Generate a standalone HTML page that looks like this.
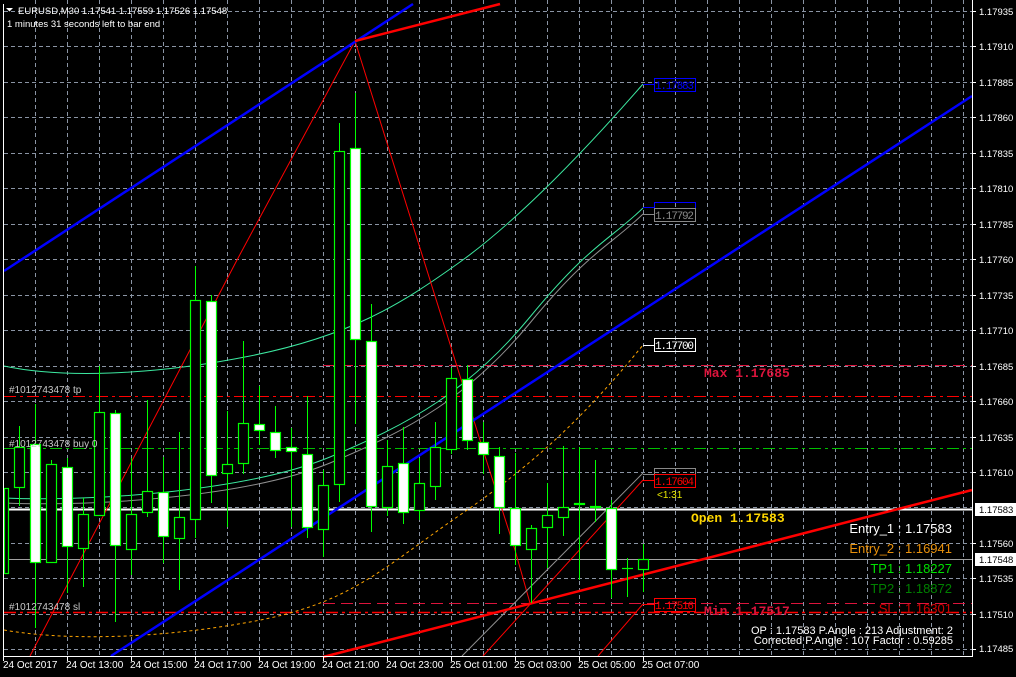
<!DOCTYPE html>
<html><head><meta charset="utf-8"><style>
html,body{margin:0;padding:0;background:#000;width:1016px;height:677px;overflow:hidden}
svg{display:block}
text{font-family:"Liberation Sans",sans-serif}
.mono{font-family:"Liberation Mono",monospace}
</style></head><body>
<svg width="1016" height="677" viewBox="0 0 1016 677" xmlns="http://www.w3.org/2000/svg">
<rect width="1016" height="677" fill="#000"/>
<!-- grid -->
<g stroke="#8a94a4" stroke-width="1" stroke-dasharray="4,3" fill="none">
<path d="M4 11.5H972M4 46.5H972M4 82.5H972M4 117.5H972M4 153.5H972M4 188.5H972M4 224.5H972M4 259.5H972M4 295.5H972M4 330.5H972M4 366.5H972M4 401.5H972M4 437.5H972M4 472.5H972M4 507.5H972M4 543.5H972M4 578.5H972M4 614.5H972M4 649.5H972"/>
<path d="M35.5 0V656M67.5 0V656M99.5 0V656M131.5 0V656M163.5 0V656M195.5 0V656M227.5 0V656M259.5 0V656M291.5 0V656M323.5 0V656M355.5 0V656M387.5 0V656M419.5 0V656M451.5 0V656M483.5 0V656M515.5 0V656M547.5 0V656M579.5 0V656M611.5 0V656M643.5 0V656M675.5 0V656M707.5 0V656M739.5 0V656M771.5 0V656M803.5 0V656M835.5 0V656M867.5 0V656M899.5 0V656M931.5 0V656M963.5 0V656"/>
</g>
<!-- horizontal level lines -->
<g fill="none">
<path d="M323 365.5H972" stroke="#dc143c" stroke-dasharray="12,6"/>
<path d="M4 396.5H972" stroke="#ff0000" stroke-dasharray="12,4,3,4"/>
<path d="M4 448.5H972" stroke="#00c000" stroke-dasharray="12,4,3,4"/>
<path d="M323 603.5H972" stroke="#dc143c" stroke-dasharray="12,6"/>
<path d="M4 612.5H972" stroke="#ff0000" stroke-dasharray="12,4,3,4" stroke-width="1.5"/>
<path d="M4 559.5H972" stroke="#a0a0a0"/>
<path d="M4 509.5H972" stroke="#ffffff" stroke-width="2"/>
</g>
<!-- curves -->
<g fill="none" stroke-width="1">
<path stroke="#3ce8a0" d="M4 366 C 60 378, 150 376, 250 356 S 400 305, 460 262 S 590 145, 643 84"/>
<path stroke="#3ce8a0" d="M4 498 C 100 502, 250 490, 330 457 S 470 390, 530 317 S 610 240, 643 208"/>
<path stroke="#909090" d="M4 503 C 100 507, 250 496, 330 463 S 470 396, 530 323 S 610 246, 643 214"/>
<path stroke="#ffa500" stroke-dasharray="3,3" d="M4 630 C 60 640, 150 640, 250 622 S 380 570, 460 515 S 590 410, 643 345"/>
</g>
<!-- thin red zigzag -->
<g fill="none" stroke="#ff0000" stroke-width="1">
<polyline points="30,656 237,260 355,41 430,280 485,456 515,550 530,603"/>
<line x1="483" y1="656" x2="643" y2="480"/>
<line x1="598" y1="656" x2="643" y2="604"/>
</g>
<line x1="462" y1="656" x2="643" y2="473" stroke="#909090"/>
<!-- blue lines -->
<g stroke="#0000ff" stroke-width="2.5">
<line x1="4" y1="271" x2="413" y2="4"/>
<line x1="111" y1="656" x2="972" y2="96"/>
</g>
<!-- red thick lines -->
<g stroke="#ff0000" stroke-width="2.5">
<line x1="355" y1="41" x2="500" y2="4"/>
<line x1="323" y1="657" x2="972" y2="490"/>
</g>
<!-- candles -->
<g stroke="#00ff00" stroke-width="1">
<path d="M3.5 423V575M19.5 426V506M35.5 404V628M51.5 460V563M67.5 458V593M83.5 498V587M99.5 366V515M115.5 410V622M131.5 458V575M147.5 400V517M163.5 457V563M179.5 432V590M195.5 266V538M211.5 295V503M227.5 411V527M243.5 341V474M259.5 386V445M275.5 406V458M291.5 428V527M307.5 396V538M323.5 470V557M339.5 123V502M355.5 93V424M371.5 304V532M387.5 440V516M403.5 427V524M419.5 458V520M435.5 422V500M451.5 368V454M467.5 365V450M483.5 422V474M499.5 447V534M515.5 453V565M531.5 525V603M547.5 483V568M563.5 446V536M579.5 447V580M595.5 460V522M611.5 500V598M627.5 558V597M643.5 544V592"/>
</g>
<g stroke="#00ff00" stroke-width="1.2">
<rect x="4.5" y="488.5" width="4" height="85" fill="#000"/>
<rect x="14.5" y="447.5" width="10" height="40" fill="#000"/>
<rect x="30.5" y="444.5" width="10" height="118" fill="#fff"/>
<rect x="46.5" y="464.5" width="10" height="98" fill="#000"/>
<rect x="62.5" y="467.5" width="10" height="79" fill="#fff"/>
<rect x="78.5" y="514.5" width="10" height="34" fill="#000"/>
<rect x="94.5" y="412.5" width="10" height="103" fill="#000"/>
<rect x="110.5" y="413.5" width="10" height="132" fill="#fff"/>
<rect x="126.5" y="514.5" width="10" height="35" fill="#000"/>
<rect x="142.5" y="491.5" width="10" height="21" fill="#000"/>
<rect x="158.5" y="492.5" width="10" height="44" fill="#fff"/>
<rect x="174.5" y="517.5" width="10" height="21" fill="#000"/>
<rect x="190.5" y="300.5" width="10" height="219" fill="#000"/>
<rect x="206.5" y="301.5" width="10" height="174" fill="#fff"/>
<rect x="222.5" y="464.5" width="10" height="9" fill="#000"/>
<rect x="238.5" y="423.5" width="10" height="40" fill="#000"/>
<rect x="254.5" y="424.5" width="10" height="6" fill="#fff"/>
<rect x="270.5" y="432.5" width="10" height="18" fill="#fff"/>
<rect x="286.5" y="447.5" width="10" height="4" fill="#fff"/>
<rect x="302.5" y="454.5" width="10" height="73" fill="#fff"/>
<rect x="318.5" y="485.5" width="10" height="44" fill="#000"/>
<rect x="334.5" y="151.5" width="10" height="333" fill="#000"/>
<rect x="350.5" y="148.5" width="10" height="191" fill="#fff"/>
<rect x="366.5" y="341.5" width="10" height="165" fill="#fff"/>
<rect x="382.5" y="466.5" width="10" height="41" fill="#000"/>
<rect x="398.5" y="463.5" width="10" height="49" fill="#fff"/>
<rect x="414.5" y="483.5" width="10" height="27" fill="#000"/>
<rect x="430.5" y="447.5" width="10" height="39" fill="#000"/>
<rect x="446.5" y="378.5" width="10" height="71" fill="#000"/>
<rect x="462.5" y="379.5" width="10" height="61" fill="#fff"/>
<rect x="478.5" y="442.5" width="10" height="12" fill="#fff"/>
<rect x="494.5" y="456.5" width="10" height="51" fill="#fff"/>
<rect x="510.5" y="508.5" width="10" height="37" fill="#fff"/>
<rect x="526.5" y="528.5" width="10" height="21" fill="#000"/>
<rect x="542.5" y="515.5" width="10" height="12" fill="#000"/>
<rect x="558.5" y="507.5" width="10" height="10" fill="#000"/>
<rect x="574.5" y="503.5" width="10" height="1" fill="#00ff00"/>
<rect x="590.5" y="506.5" width="10" height="1" fill="#00ff00"/>
<rect x="606.5" y="508.5" width="10" height="61" fill="#fff"/>
<path d="M622 568.5H633" fill="none"/>
<rect x="638.5" y="559.5" width="10" height="10" fill="#000"/>
</g>
<!-- price labels at right of zigzag -->
<g font-size="11">
<path d="M643 214.5H654M643 474.5H654" stroke="#888"/>
<path d="M643 84.5H654M643 207.5H654" stroke="#0000ff"/>
<path d="M643 345.5H654" stroke="#fff"/>
<path d="M643 480.5H654M643 604.5H654" stroke="#ff0000"/>
<rect x="654.5" y="78.5" width="41" height="13" fill="none" stroke="#0000ff"/>
<text x="655" y="89" fill="#0000ff" class="mono" textLength="39">1.17883</text>
<rect x="654.5" y="202.5" width="41" height="12" fill="none" stroke="#0000ff"/>
<rect x="654.5" y="208.5" width="41" height="13" fill="#000" stroke="#888"/>
<text x="655" y="219" fill="#888" class="mono" textLength="39">1.17792</text>
<rect x="654.5" y="338.5" width="41" height="13" fill="none" stroke="#fff"/>
<text x="655" y="349" fill="#fff" class="mono" textLength="39">1.17700</text>
<rect x="654.5" y="468.5" width="41" height="12" fill="none" stroke="#888"/>
<rect x="654.5" y="474.5" width="41" height="13" fill="#000" stroke="#ff0000"/>
<text x="655" y="485" fill="#ff0000" class="mono" textLength="39">1.17604</text>
<rect x="654.5" y="598.5" width="41" height="13" fill="none" stroke="#ff0000"/>
<text x="655" y="609" fill="#ff0000" class="mono" textLength="39">1.17516</text>
</g>
<text x="657" y="498" fill="#e8e800" font-size="10">&lt;1:31</text>
<text x="691" y="522" fill="#ffd700" font-size="13" font-weight="bold" class="mono">Open 1.17583</text>
<text x="704" y="377" fill="#dc143c" font-size="13" font-weight="bold" class="mono">Max 1.17685</text>
<text x="704" y="615" fill="#dc143c" font-size="13" font-weight="bold" class="mono">Min 1.17517</text>
<g font-size="13" text-anchor="end">
<text x="952" y="533" fill="#ffffff">Entry_1 : 1.17583</text>
<text x="952" y="553" fill="#e8900c">Entry_2 : 1.16941</text>
<text x="952" y="573" fill="#00e000">TP1 : 1.18227</text>
<text x="952" y="593" fill="#008000">TP2 : 1.18872</text>
<text x="952" y="613" fill="#d00000">SL : 1.16301</text>
</g>
<g font-size="11" fill="#fff" text-anchor="end">
<text x="953" y="634">OP : 1.17583   P.Angle : 213   Adjustment: 2</text>
<text x="953" y="644">Corrected P.Angle : 107   Factor : 0.59285</text>
</g>
<!-- order labels -->
<g font-size="10" fill="#c8c8c8">
<text x="9" y="393">#1012743478 tp</text>
<text x="9" y="447">#1012743478 buy 0</text>
<text x="9" y="610">#1012743478 sl</text>
</g>
<!-- frame -->
<path d="M3.5 4V656.5H972.5V0" fill="none" stroke="#fff"/>
<!-- price axis -->
<g font-size="9.5" fill="#fff">
<path d="M972 11.5h4M972 46.5h4M972 82.5h4M972 117.5h4M972 153.5h4M972 188.5h4M972 224.5h4M972 259.5h4M972 295.5h4M972 330.5h4M972 366.5h4M972 401.5h4M972 437.5h4M972 472.5h4M972 543.5h4M972 578.5h4M972 614.5h4M972 649.5h4" stroke="#fff"/>
<text x="979" y="15">1.17935</text>
<text x="979" y="50">1.17910</text>
<text x="979" y="86">1.17885</text>
<text x="979" y="121">1.17860</text>
<text x="979" y="157">1.17835</text>
<text x="979" y="192">1.17810</text>
<text x="979" y="228">1.17785</text>
<text x="979" y="263">1.17760</text>
<text x="979" y="299">1.17735</text>
<text x="979" y="334">1.17710</text>
<text x="979" y="370">1.17685</text>
<text x="979" y="405">1.17660</text>
<text x="979" y="441">1.17635</text>
<text x="979" y="476">1.17610</text>
<text x="979" y="547">1.17560</text>
<text x="979" y="582">1.17535</text>
<text x="979" y="618">1.17510</text>
<text x="979" y="652">1.17485</text>
<rect x="975" y="503" width="41" height="13" fill="#fff"/>
<text x="979" y="513" fill="#000">1.17583</text>
<rect x="975" y="553" width="41" height="13" fill="#fff"/>
<text x="979" y="563" fill="#000">1.17548</text>
</g>
<!-- time axis -->
<g font-size="10" fill="#fff">
<path d="M3.5 656v5M67.5 656v5M131.5 656v5M195.5 656v5M259.5 656v5M323.5 656v5M387.5 656v5M451.5 656v5M515.5 656v5M579.5 656v5M643.5 656v5" stroke="#fff"/>
<text x="3" y="668">24 Oct 2017</text>
<text x="66" y="668">24 Oct 13:00</text>
<text x="130" y="668">24 Oct 15:00</text>
<text x="194" y="668">24 Oct 17:00</text>
<text x="258" y="668">24 Oct 19:00</text>
<text x="322" y="668">24 Oct 21:00</text>
<text x="386" y="668">24 Oct 23:00</text>
<text x="450" y="668">25 Oct 01:00</text>
<text x="514" y="668">25 Oct 03:00</text>
<text x="578" y="668">25 Oct 05:00</text>
<text x="642" y="668">25 Oct 07:00</text>
</g>
<!-- header -->
<path d="M6 8h7l-3.5 3.5z" fill="#fff"/>
<text x="18" y="14" fill="#fff" font-size="9.5">EURUSD,M30  1.17541 1.17559 1.17526 1.17548</text>
<text x="7" y="27" fill="#fff" font-size="9.5">1 minutes 31 seconds left to bar end</text>
</svg>
</body></html>
